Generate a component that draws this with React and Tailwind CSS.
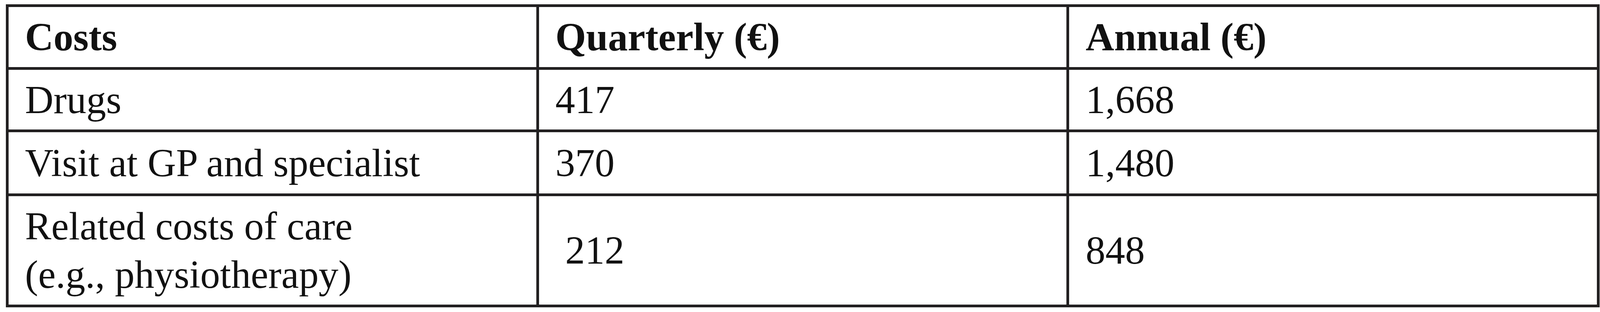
const rows = [
  { label: ['Drugs'], quarterly: '417', annual: '1,668', height: 'h-[153px]' },
  { label: ['Visit at GP and specialist'], quarterly: '370', annual: '1,480', height: 'h-[157px]' },
  {
    label: ['Related costs of care', '(e.g., physiotherapy)'],
    quarterly: '\u00a0212',
    annual: '848',
    height: 'h-[278px]',
  },
]

const Cell = ({ children, bold = false, height }) => (
  <div
    className={`flex min-w-0 items-center bg-white pl-[42px] ${height} ${bold ? 'font-bold' : 'font-normal'}`}
  >
    <div>{children}</div>
  </div>
)

const App = () => {
  return (
    <div className="min-h-[800px] w-full bg-white pl-[15px] pr-px pt-[11px]">
      <div
        className="grid w-full grid-cols-3 gap-[7px] bg-[#222021] p-[7px] text-[101px] leading-[124px] text-[#111]"
        style={{ fontFamily: '"Liberation Serif", "Times New Roman", serif' }}
      >
        <Cell bold height="h-[154px]">Costs</Cell>
        <Cell bold height="h-[154px]">Quarterly (€)</Cell>
        <Cell bold height="h-[154px]">Annual (€)</Cell>
        {rows.map((row) => (
          <div key={row.label[0]} className="contents">
            <Cell height={row.height}>
              {row.label.map((line) => (
                <div key={line} className="whitespace-nowrap">
                  {line}
                </div>
              ))}
            </Cell>
            <Cell height={row.height}>{row.quarterly}</Cell>
            <Cell height={row.height}>{row.annual}</Cell>
          </div>
        ))}
      </div>
    </div>
  )
}

export default App
